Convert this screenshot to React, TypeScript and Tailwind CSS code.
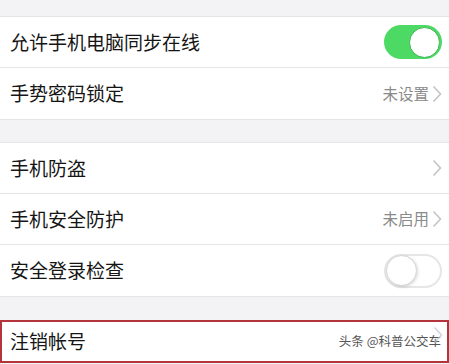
import React from 'react';

const font = { fontFamily: '"Noto Sans CJK SC", "Noto Sans", sans-serif' };

const Chevron: React.FC = () => (
  <svg width="10" height="18" viewBox="0 0 10 18" className="ml-[3px]">
    <path d="M1.5 1.5 L8.5 9 L1.5 16.5" fill="none" stroke="#c4c4c8" strokeWidth="1.6" />
  </svg>
);

const Toggle: React.FC<{ on: boolean }> = ({ on }) =>
  on ? (
    <div className="w-[58px] h-[34px] rounded-full bg-[#4cd964] flex items-center justify-end pr-[2px]">
      <div className="w-[31px] h-[31px] rounded-full bg-white border border-[#3fb556]" />
    </div>
  ) : (
    <div className="w-[58px] h-[34px] rounded-full bg-white border-2 border-[#e6e6e6] flex items-center">
      <div className="w-[31px] h-[31px] rounded-full bg-white border border-[#d6d6d6] shadow-[1px_1px_3px_rgba(0,0,0,0.15)]" />
    </div>
  );

const Row: React.FC<{ label: string; right?: React.ReactNode; last?: boolean }> = ({ label, right, last }) => (
  <div className={`h-[51px] bg-white flex items-center justify-between pl-[10px] pr-[7px] ${last ? '' : 'border-b border-[#e5e5e5]'}`}>
    <span className="text-[19px] text-[#151515]">{label}</span>
    {right}
  </div>
);

const Value: React.FC<{ text: string }> = ({ text }) => (
  <div className="flex items-center">
    <span className="text-[15.5px] text-[#8a8a8a]">{text}</span>
    <Chevron />
  </div>
);

export default function App() {
  return (
    <div className="w-[449px] h-[364px] bg-[#f3f3f5] overflow-hidden" style={font}>
      <div className="h-[17px] border-b border-[#e5e5e5]" />
      <Row label="允许手机电脑同步在线" right={<Toggle on />} />
      <Row label="手势密码锁定" right={<Value text="未设置" />} last />
      <div className="h-[24px] border-y border-[#e5e5e5]" />
      <Row label="手机防盗" right={<Chevron />} />
      <Row label="手机安全防护" right={<Value text="未启用" />} />
      <Row label="安全登录检查" right={<Toggle on={false} />} last />
      <div className="h-[24px] border-t border-[#e5e5e5]" />
      <div className="h-[43px] bg-white border-2 border-[#b5343c] flex items-center justify-between pl-[8px] pr-[6px]">
        <span className="text-[19px] text-[#151515]">注销帐号</span>
        <div className="relative flex items-center">
          <span className="text-[12.5px] text-[#555]">头条 @科普公交车</span>
          <div className="absolute right-[-2px] top-[-6px] opacity-70">
            <Chevron />
          </div>
        </div>
      </div>
    </div>
  );
}
